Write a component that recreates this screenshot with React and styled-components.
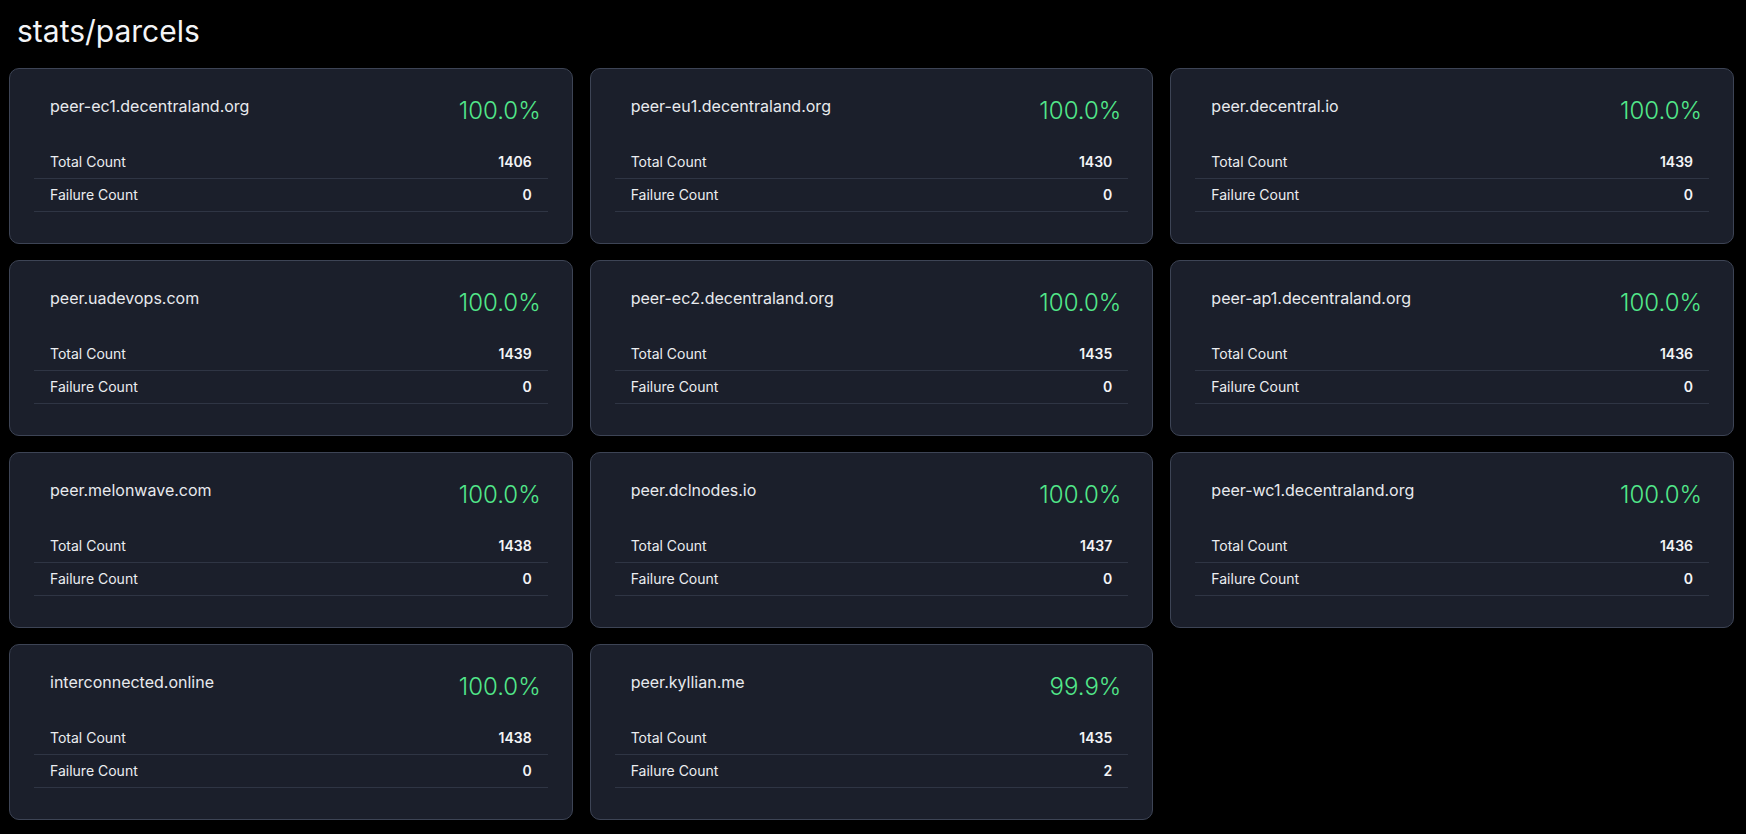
import React from "react";
import styled, { createGlobalStyle } from "styled-components";

const Global = createGlobalStyle`
  html, body { margin: 0; padding: 0; background: #000; }
  body { font-family: Inter, "Noto Sans", sans-serif; color: #e5e7eb; }
`;

const Page = styled.div`
  background: #000;
  min-height: 834px;
  padding: 13px 12px 0 9px;
  box-sizing: border-box;
`;

const Title = styled.h1`
  margin: 0 0 19px 8px;
  font-size: 30px;
  line-height: 36px;
  font-weight: 400;
  color: #f3f4f6;
`;

const Grid = styled.div`
  display: grid;
  grid-template-columns: repeat(3, 1fr);
  column-gap: 17px;
  row-gap: 16px;
`;

const Card = styled.div`
  box-sizing: border-box;
  background: #1b1f2b;
  border: 1px solid #3d4455;
  border-radius: 10px;
  padding: 26px 24px 24px 24px;
`;

const Header = styled.div`
  display: flex;
  justify-content: space-between;
  align-items: flex-start;
  padding: 0 7px 0 16px;
  margin-bottom: 19px;
`;

const Host = styled.div`
  font-size: 16px;
  line-height: 22px;
  color: #e8eaee;
`;

const Percent = styled.div`
  font-size: 24px;
  line-height: 32px;
  font-weight: 300;
  color: ${(p) => (p.$ok ? "#52e88a" : "#facc15")};
`;

const Table = styled.div`
  margin-bottom: 7px;
`;

const Row = styled.div`
  display: flex;
  justify-content: space-between;
  padding: 6px 16px;
  line-height: 20px;
  font-size: 14px;
  border-bottom: 1px solid #2f3544;
`;

const Label = styled.span`
  color: #eceef1;
`;

const Value = styled.span`
  color: #f3f4f6;
  font-weight: 600;
`;

const data = [
  ["peer-ec1.decentraland.org", "100.0%", 1406, 0],
  ["peer-eu1.decentraland.org", "100.0%", 1430, 0],
  ["peer.decentral.io", "100.0%", 1439, 0],
  ["peer.uadevops.com", "100.0%", 1439, 0],
  ["peer-ec2.decentraland.org", "100.0%", 1435, 0],
  ["peer-ap1.decentraland.org", "100.0%", 1436, 0],
  ["peer.melonwave.com", "100.0%", 1438, 0],
  ["peer.dclnodes.io", "100.0%", 1437, 0],
  ["peer-wc1.decentraland.org", "100.0%", 1436, 0],
  ["interconnected.online", "100.0%", 1438, 0],
  ["peer.kyllian.me", "99.9%", 1435, 2],
];

export default function App() {
  return (
    <>
      <Global />
      <Page>
        <Title>stats/parcels</Title>
        <Grid>
          {data.map(([host, pct, total, fail]) => (
            <Card key={host}>
              <Header>
                <Host>{host}</Host>
                <Percent $ok>{pct}</Percent>
              </Header>
              <Table>
                <Row>
                  <Label>Total Count</Label>
                  <Value>{total}</Value>
                </Row>
                <Row>
                  <Label>Failure Count</Label>
                  <Value>{fail}</Value>
                </Row>
              </Table>
            </Card>
          ))}
        </Grid>
      </Page>
    </>
  );
}
